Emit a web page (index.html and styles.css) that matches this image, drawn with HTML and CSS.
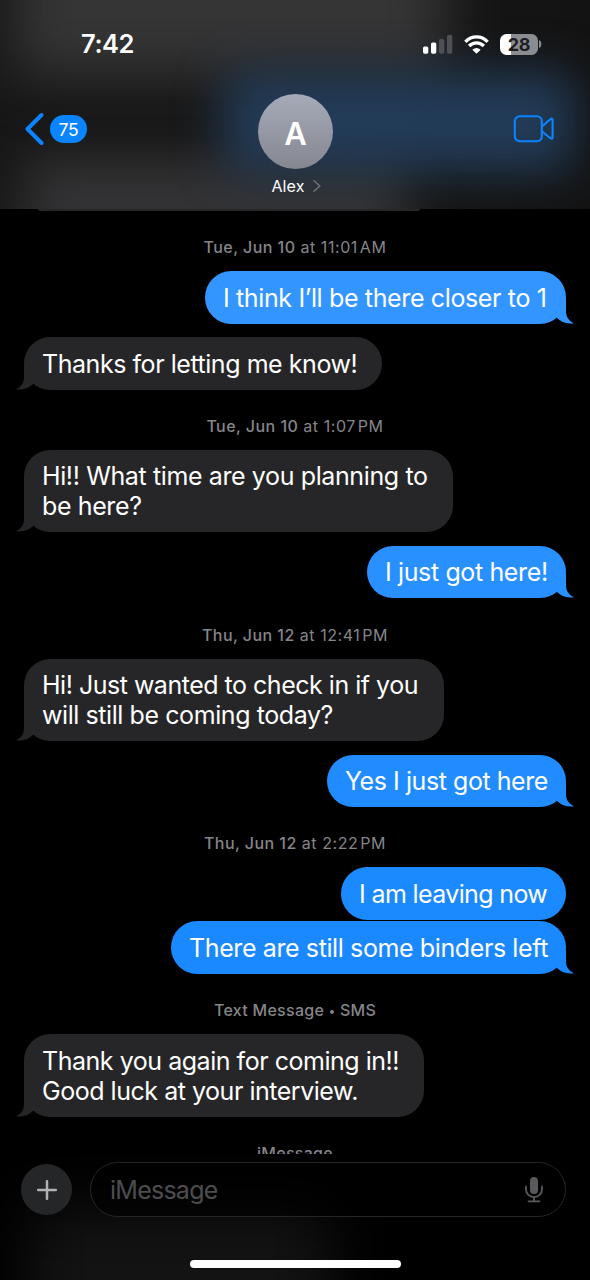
FILE: index.html
```html
<!DOCTYPE html>
<html lang="en">
<head>
<meta charset="utf-8">
<title>Messages</title>
<link rel="stylesheet" href="styles.css">
</head>
<body>
<svg class="defs" aria-hidden="true">
  <symbol id="tail" viewBox="0 0 24 24"><path d="M16 0V11C16 17 19 21 24 23.2C17 24.6 11 22 6.6 17.8L0 0Z"/></symbol>
</svg>
<div class="phone">
  <header class="header">
    <div class="backdrop"><i class="glow upper"></i><i class="glow lower"></i><i class="glow blue"></i></div>
    <div class="status">
      <span class="time">7:42</span>
      <div class="status-icons">
        <svg class="signal" viewBox="0 0 30 19" width="30" height="19"><rect x="0" y="11.5" width="5.3" height="7.2" rx="1.6" fill="#fff"/><rect x="8" y="7.5" width="5.3" height="11.2" rx="1.6" fill="#fff"/><rect x="16" y="4" width="5.3" height="14.7" rx="1.6" fill="#4d5156"/><rect x="24" y="0" width="5.3" height="18.7" rx="1.6" fill="#4d5156"/></svg>
        <svg class="wifi" viewBox="0 0 26 20" width="25" height="19"><g fill="none" stroke="#fff" stroke-width="3.5"><path d="M1.3 7.2Q6.3 2 13 2T24.7 7.2"/><path d="M5.2 11.6Q8.6 8.2 13 8.2T20.8 11.6"/></g><path d="M8.6 15.6Q13 11.6 17.4 15.6L13 19.8Z" fill="#fff"/></svg>
        <div class="battery"><span>28</span></div>
        <svg class="cap" viewBox="0 0 3 8" width="3" height="8"><path d="M0 0Q2.4 1 2.4 4T0 8Z" fill="#8b8c90"/></svg>
      </div>
    </div>
    <div class="nav">
      <div class="back">
        <svg viewBox="0 0 20 34" width="20" height="34"><path d="M17.5 3L3.5 17L17.5 31" fill="none" stroke="#0a84ff" stroke-width="4" stroke-linecap="round" stroke-linejoin="round"/></svg>
        <span class="unread">75</span>
      </div>
      <div class="contact">
        <div class="avatar">A</div>
        <div class="name">Alex<svg viewBox="0 0 8 12" width="8" height="12"><path d="M1 .8L6.8 6L1 11.2" fill="none" stroke="#707176" stroke-width="1.5" stroke-linecap="round"/></svg></div>
      </div>
      <svg class="video" viewBox="0 0 41 28" width="41" height="28"><g fill="none" stroke="#0a84ff" stroke-width="2.1" stroke-linejoin="round"><rect x="1.8" y="1.3" width="27" height="25" rx="5"/><path d="M28.9 11.5L37.4 4.2Q39.6 2.8 39.6 5V22.3Q39.6 24.6 37.4 23.2L28.9 16.2"/></g></svg>
    </div>
  </header>

  <main class="thread">
    <div class="previous"></div>
    <div class="stamp first"><p><b>Tue, Jun 10</b> at 11:01&#8202;AM</p></div>
    <div class="bubble sent t1 w1"><svg class="tail"><use href="#tail"/></svg><p class="m1">I think I’ll be there closer to 1</p></div>
    <div class="bubble received w2"><svg class="tail"><use href="#tail"/></svg><p class="m2">Thanks for letting me know!</p></div>
    <div class="stamp"><p><b>Tue, Jun 10</b> at 1:07&#8202;PM</p></div>
    <div class="bubble received w3"><svg class="tail"><use href="#tail"/></svg><p class="m3">Hi!! What time are you planning to<br>be here?</p></div>
    <div class="bubble sent t2 w4"><svg class="tail"><use href="#tail"/></svg><p class="m4">I just got here!</p></div>
    <div class="stamp"><p><b>Thu, Jun 12</b> at 12:41&#8202;PM</p></div>
    <div class="bubble received w5"><svg class="tail"><use href="#tail"/></svg><p class="m5">Hi! Just wanted to check in if you<br><span>will still be coming today?</span></p></div>
    <div class="bubble sent t3 w6"><svg class="tail"><use href="#tail"/></svg><p class="m6">Yes I just got here</p></div>
    <div class="stamp"><p><b>Thu, Jun 12</b> at 2:22&#8202;PM</p></div>
    <div class="bubble sent t4 w7"><p class="m7">I am leaving now</p></div>
    <div class="bubble sent t5 w8 grouped"><svg class="tail"><use href="#tail"/></svg><p class="m8">There are still some binders left</p></div>
    <div class="stamp service"><p><b>Text Message <small>•</small> SMS</b></p></div>
    <div class="bubble received w9"><svg class="tail"><use href="#tail"/></svg><p class="m9">Thank you again for coming in!!<br>Good luck at your interview.</p></div>
    <div class="stamp service"><p><b>iMessage</b></p></div>
  </main>

  <footer class="composer">
    <div class="backdrop"><i class="glow soft"></i></div>
    <div class="entry">
      <div class="plus"><svg viewBox="0 0 20 20" width="20" height="20"><path d="M10 1.2V18.8M1.2 10H18.8" stroke="#b1b2b5" stroke-width="2.5" stroke-linecap="round"/></svg></div>
      <div class="field"><span>iMessage</span>
        <svg viewBox="0 0 18 26" width="18" height="26"><rect x="5" y="0" width="8" height="17" rx="4" fill="#5a5a5d"/><path d="M1 9.5V12.5A8 7.6 0 0 0 17 12.5V9.5M9 20V24M3.5 24.3H14.5" fill="none" stroke="#5a5a5d" stroke-width="1.8" stroke-linecap="round"/></svg>
      </div>
    </div>
    <div class="home"></div>
  </footer>
</div>
</body>
</html>
```
FILE: styles.css
```css
* { box-sizing: border-box; }
body { margin: 0; background: #000; }
p { margin: 0; }
.defs { display: none; }
.phone {
  width: 590px; height: 1280px; overflow: hidden;
  display: flex; flex-direction: column;
  background: #000; color: #fff;
  font-family: Inter, "Liberation Sans", sans-serif;
}

/* Blurred colour behind the translucent bars */
.backdrop { position: absolute; inset: 0; overflow: hidden; z-index: -1; }
.glow { position: absolute; }
.upper { left: 15px; top: -120px; width: 430px; height: 196px; background: #353536; filter: blur(27px); }
.lower { left: 25px; top: 158px; width: 380px; height: 160px; background: #333335; filter: blur(25px); }
.blue { left: 224px; top: 72px; width: 350px; height: 100px; background: rgba(36,62,92,.93); filter: blur(23px); border-radius: 20px; }
.soft { left: 30px; top: 55px; width: 300px; height: 150px; background: #131313; filter: blur(30px); }

/* Header */
.header { height: 209px; flex: none; position: relative; z-index: 0; background: linear-gradient(90deg, #171717, #171717 60%, #131313); }
.status { height: 88px; padding: 0 48px 0 81px; display: flex; align-items: center; justify-content: space-between; }
.time { font-size: 25.5px; font-weight: 600; letter-spacing: -.45px; margin-top: -1px; }
.status-icons { display: flex; align-items: center; }
.wifi { margin-left: 11px; }
.battery {
  width: 38px; height: 21px; margin-left: 11px; border-radius: 6.5px;
  background: linear-gradient(90deg, #fff 11px, #8b8c90 11px);
  display: flex; justify-content: center; align-items: center;
  color: #1b1e22; font-size: 18px; font-weight: 700; letter-spacing: -.2px;
}
.cap { margin-left: 1px; }
.nav { height: 121px; padding: 0 36px 0 24px; display: grid; grid-template-columns: 1fr 76px 1fr; }
.back { display: flex; gap: 6px; height: 34px; margin-top: 24px; align-items: center; }
.unread { width: 37px; height: 28px; border-radius: 14px; background: #0a84ff; display: flex; align-items: center; justify-content: center; font-size: 17.5px; letter-spacing: -.2px; }
.contact { width: 76px; margin: 6px 0 0 13px; justify-self: center; display: flex; flex-direction: column; align-items: center; }
.avatar {
  width: 75px; height: 75px; border-radius: 50%; flex: none;
  background: linear-gradient(#a6abb9, #858790);
  display: flex; align-items: center; justify-content: center;
  font-size: 31px; font-weight: 600; line-height: 1; padding-top: 3px;
}
.name { display: flex; align-items: center; gap: 8px; margin: 7px 0 0 1px; font-size: 16px; line-height: 20px; letter-spacing: .1px; }
.video { justify-self: end; margin-top: 27px; }

/* Conversation */
.thread { flex: none; height: 945px; overflow: hidden; display: flex; flex-direction: column; align-items: flex-start; padding: 0 24px; }
.previous { flex: none; width: 382px; height: 1.5px; margin-left: 14px; background: #262628; border-radius: 0 0 12px 12px; }
.stamp { flex: none; width: 100%; line-height: 20px; font-size: 16px; color: #85858a; text-align: center; white-space: nowrap; letter-spacing: .55px; }
.stamp b { font-weight: 550; letter-spacing: .45px; }
.stamp.service b { letter-spacing: .28px; }
.stamp small { font-size: 12px; vertical-align: 1px; }
.stamp.first { height: 60.5px; padding-top: 26.5px; }
.stamp + .bubble { margin-top: 0; }
.bubble {
  flex: none; position: relative; margin-top: 13.5px; padding: 11.5px 18.5px 11px 18px;
  border-radius: 26.25px; font-size: 25px; line-height: 30px; white-space: nowrap;
}
.bubble p { position: relative; }
.bubble + .stamp { height: 60.25px; padding-top: 26.25px; }
.received { background: #262628; }
.sent { align-self: flex-end; color: #fff; }
.grouped { margin-top: 1.5px; }
.tail { position: absolute; bottom: 0; width: 24px; height: 24px; }
.sent .tail { right: -8px; }
.received .tail { left: -8px; fill: #262628; transform: scaleX(-1); }
.t1 { background: #3395ff; } .t1 .tail { fill: #3395ff; }
.t2 { background: #2990ff; } .t2 .tail { fill: #2990ff; }
.t3 { background: #208cff; } .t3 .tail { fill: #208cff; }
.t4 { background: #1c8aff; }
.t5 { background: #1a89ff; } .t5 .tail { fill: #1a89ff; }
.w1 { width: 361px; } .w2 { width: 358px; } .w3 { width: 428.5px; }
.w4 { width: 199px; } .w5 { width: 419.5px; } .w6 { width: 239px; }
.w7 { width: 225px; } .w8 { width: 395px; } .w9 { width: 400px; }

/* Tracking per message */
.m1 { letter-spacing: -.36px; } .m2 { letter-spacing: -.45px; } .m3 { letter-spacing: -.38px; }
.m4 { letter-spacing: -.37px; } .m5 { letter-spacing: -.49px; } .m5 span { letter-spacing: -.42px; }
.m6 { letter-spacing: -.44px; } .m7 { letter-spacing: -.63px; } .m8 { letter-spacing: -.39px; } .m9 { letter-spacing: -.47px; }

/* Message entry */
.composer {
  flex: none; height: 126px; padding: 8px 24px 0 21px; position: relative; z-index: 0;
  display: flex; flex-direction: column; align-items: center; background: #000;
}
.entry { width: 100%; display: flex; align-items: center; gap: 18px; }
.plus { width: 51px; height: 51px; border-radius: 50%; background: #252628; display: flex; align-items: center; justify-content: center; }
.field {
  flex: 1; height: 55px; border: 1.5px solid #262627; border-radius: 28px;
  padding: 0 22px 0 19px; display: flex; align-items: center; justify-content: space-between;
  color: #4d4d50; font-size: 25px; letter-spacing: -.75px; background: rgba(0,0,0,.6);
}
.home { width: 211px; height: 8px; border-radius: 4px; background: #fff; margin: 43px 0 0 3px; }
```
